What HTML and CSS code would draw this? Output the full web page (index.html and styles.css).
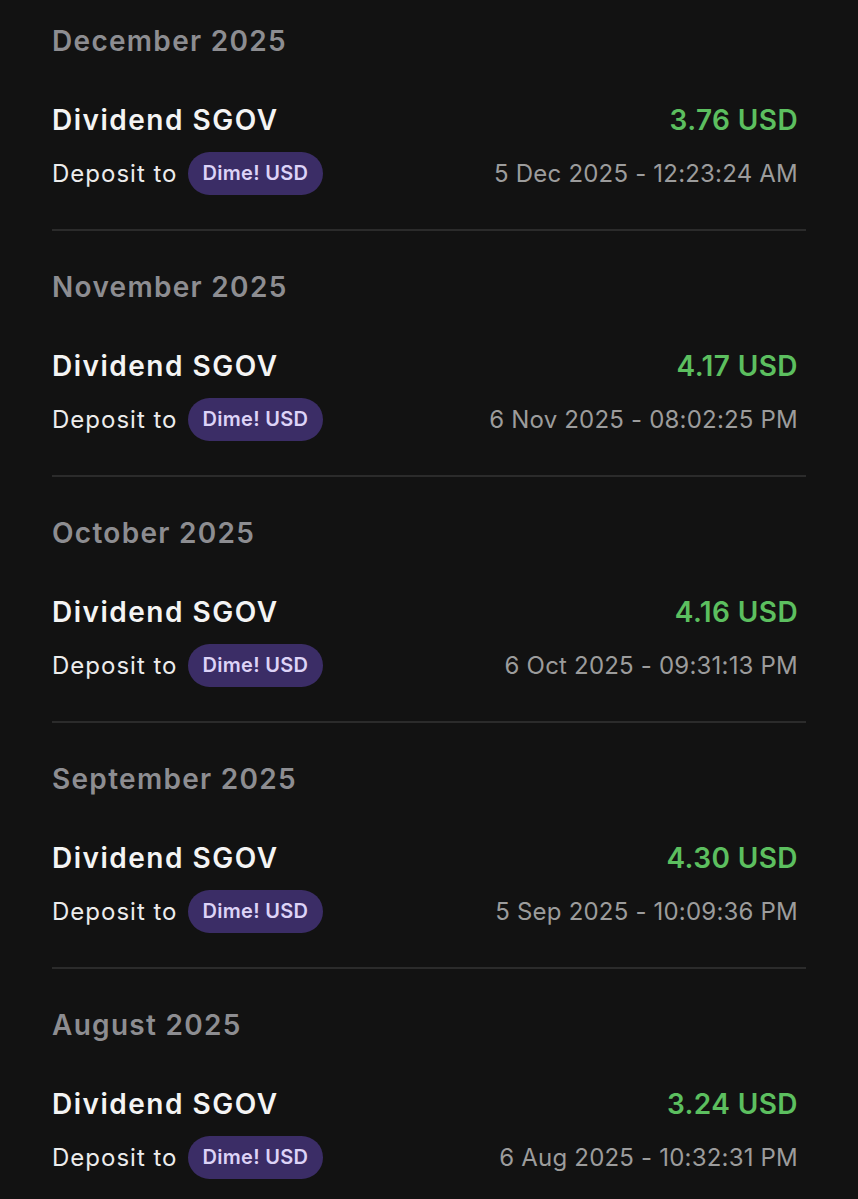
FILE: index.html
```html
<!DOCTYPE html>
<html lang="en">
<head>
  <meta charset="UTF-8">
  <meta name="viewport" content="width=device-width, initial-scale=1.0">
  <title>Dividend History</title>
  <link rel="stylesheet" href="styles.css">
</head>
<body>

  <div class="history">
    <!-- December -->
    <section class="month">
      <h2>December 2025</h2>
      <div class="row">
        <span class="title">Dividend SGOV</span>
        <span class="amount">3.76 USD</span>
      </div>
      <div class="row">
        <span class="deposit">Deposit to <span class="pill">Dime! USD</span></span>
        <span class="date">5 Dec 2025 - 12:23:24 AM</span>
      </div>
    </section>

    <!-- November -->
    <section class="month">
      <h2>November 2025</h2>
      <div class="row">
        <span class="title">Dividend SGOV</span>
        <span class="amount">4.17 USD</span>
      </div>
      <div class="row">
        <span class="deposit">Deposit to <span class="pill">Dime! USD</span></span>
        <span class="date">6 Nov 2025 - 08:02:25 PM</span>
      </div>
    </section>

    <!-- October -->
    <section class="month">
      <h2>October 2025</h2>
      <div class="row">
        <span class="title">Dividend SGOV</span>
        <span class="amount">4.16 USD</span>
      </div>
      <div class="row">
        <span class="deposit">Deposit to <span class="pill">Dime! USD</span></span>
        <span class="date">6 Oct 2025 - 09:31:13 PM</span>
      </div>
    </section>

    <!-- September -->
    <section class="month">
      <h2>September 2025</h2>
      <div class="row">
        <span class="title">Dividend SGOV</span>
        <span class="amount">4.30 USD</span>
      </div>
      <div class="row">
        <span class="deposit">Deposit to <span class="pill">Dime! USD</span></span>
        <span class="date">5 Sep 2025 - 10:09:36 PM</span>
      </div>
    </section>

    <!-- August -->
    <section class="month">
      <h2>August 2025</h2>
      <div class="row">
        <span class="title">Dividend SGOV</span>
        <span class="amount">3.24 USD</span>
      </div>
      <div class="row">
        <span class="deposit">Deposit to <span class="pill">Dime! USD</span></span>
        <span class="date">6 Aug 2025 - 10:32:31 PM</span>
      </div>
    </section>
  </div>

</body>
</html>
```

FILE: styles.css
```css
body {
  font-family: 'Inter', 'Noto Sans', sans-serif;
  background-color: #121212;
  color: #f2f2f2;
  margin: 0;
  padding: 0;
  overflow: hidden;
}

.history {
  margin: 0 52px;
}

.month {
  padding: 36px 8px 34px 0;
  border-bottom: 2px solid #2b2b2b;
}

.month:first-child {
  padding-top: 21px;
}

h2 {
  margin: 0 0 39px;
  font-size: 28px;
  line-height: 40px;
  font-weight: 600;
  letter-spacing: 1.3px;
  color: #8d8d91;
}

.row {
  display: flex;
  justify-content: space-between;
  align-items: center;
}

.row + .row {
  margin-top: 12px;
}

.title {
  font-size: 28px;
  line-height: 40px;
  font-weight: 600;
  letter-spacing: 1.5px;
  color: #f4f4f4;
}

.amount {
  font-size: 28px;
  line-height: 40px;
  font-weight: 600;
  letter-spacing: 0.4px;
  color: #5cbf5f;
}

.deposit {
  display: flex;
  align-items: center;
  gap: 10px;
  font-size: 24px;
  letter-spacing: 1px;
  color: #ececec;
}

.pill {
  display: inline-block;
  height: 43px;
  line-height: 43px;
  padding: 0 15px;
  border-radius: 22px;
  background: #3b2d66;
  color: #ddd3f7;
  font-size: 20px;
  font-weight: 600;
  letter-spacing: 0.3px;
}

.date {
  font-size: 24px;
  letter-spacing: 0.2px;
  color: #9c9c9c;
}
```
